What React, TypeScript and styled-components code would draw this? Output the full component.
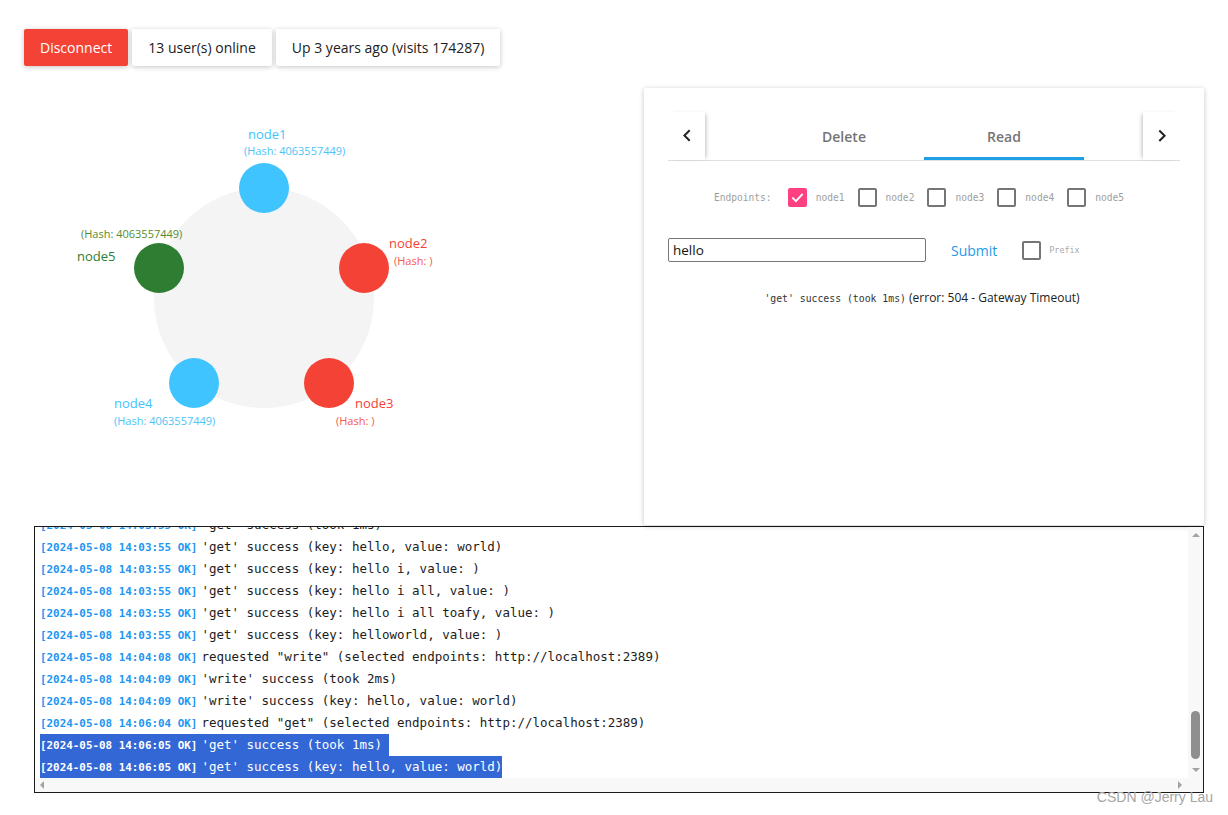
import React from "react";
import styled, { createGlobalStyle } from "styled-components";

const GlobalStyle = createGlobalStyle`
  html, body {
    margin: 0;
    padding: 0;
    background: #ffffff;
  }
  body {
    font-family: "Open Sans", "Noto Sans", sans-serif;
    color: #212121;
  }
  * {
    box-sizing: border-box;
  }
`;

const Page = styled.div`
  position: relative;
  width: 1228px;
  height: 815px;
  padding: 29px 24px 0 24px;
  overflow: hidden;
`;

const Toolbar = styled.div`
  display: flex;
  gap: 4px;
`;

const ToolButton = styled.button<{ $primary?: boolean }>`
  height: 37px;
  padding: 0 16px;
  border: none;
  border-radius: 2px;
  font-family: "Open Sans", sans-serif;
  font-size: 14px;
  background: ${(p) => (p.$primary ? "#f44336" : "#ffffff")};
  color: ${(p) => (p.$primary ? "#ffffff" : "#212121")};
  box-shadow: 0 1px 6px rgba(0, 0, 0, 0.12), 0 1px 4px rgba(0, 0, 0, 0.12);
  cursor: pointer;
`;

const MainRow = styled.div`
  display: flex;
  margin-top: 22px;
`;

const DiagramPane = styled.div`
  flex: 1;
  height: 437px;
`;

const Card = styled.div`
  width: 560px;
  height: 437px;
  background: #fff;
  border-radius: 2px;
  box-shadow: 0 1px 6px rgba(0, 0, 0, 0.12), 0 1px 4px rgba(0, 0, 0, 0.12);
  padding: 24px;
`;

const TabBar = styled.div`
  display: flex;
  height: 49px;
  border-bottom: 1px solid #e0e0e0;
`;

const ScrollButton = styled.div<{ $side: "left" | "right" }>`
  width: 37px;
  display: flex;
  align-items: center;
  justify-content: center;
  background: #fff;
  box-shadow: ${(p) =>
    p.$side === "left"
      ? "3px 0 4px -2px rgba(0, 0, 0, 0.25)"
      : "-3px 0 4px -2px rgba(0, 0, 0, 0.25)"};
`;

const TabScroller = styled.div`
  flex: 1;
  display: flex;
  justify-content: center;
`;

const Tab = styled.div<{ $active?: boolean }>`
  width: 160px;
  display: flex;
  align-items: center;
  justify-content: center;
  padding-top: 3px;
  font-size: 14px;
  font-weight: 600;
  color: #757575;
  border-bottom: 3px solid ${(p) => (p.$active ? "#1e9fe6" : "transparent")};
`;

const EndpointRow = styled.div`
  display: flex;
  align-items: center;
  justify-content: center;
  height: 20px;
  margin-top: 26px;
  padding-right: 10px;
`;

const MonoLabel = styled.span<{ $size: number; $color?: string }>`
  font-family: "DejaVu Sans Mono", monospace;
  font-size: ${(p) => p.$size}px;
  color: ${(p) => p.$color || "#9e9e9e"};
`;

const EndpointTitle = styled(MonoLabel)`
  margin-right: 16px;
`;

const Option = styled.label`
  display: flex;
  align-items: center;
  gap: 9px;
  margin-right: 13px;

  &:last-child {
    margin-right: 0;
  }
`;

const Box = styled.span<{ $checked?: boolean }>`
  width: 19px;
  height: 19px;
  border-radius: 2px;
  border: 2px solid ${(p) => (p.$checked ? "#ff4081" : "#757575")};
  background: ${(p) => (p.$checked ? "#ff4081" : "transparent")};
  display: flex;
  align-items: center;
  justify-content: center;
`;

const InputRow = styled.div`
  display: flex;
  align-items: center;
  margin-top: 31px;
`;

const KeyInput = styled.input`
  width: 258px;
  height: 24px;
  border: 1px solid #767676;
  border-radius: 2px;
  padding: 0 4px;
  font-family: "Open Sans", sans-serif;
  font-size: 13.5px;
  color: #111;
  outline: none;
`;

const SubmitButton = styled.button`
  margin-left: 25px;
  padding: 0;
  border: none;
  background: none;
  font-family: "Open Sans", sans-serif;
  font-size: 14px;
  color: #1e9be9;
  cursor: pointer;
`;

const PrefixOption = styled(Option)`
  margin-left: 25px;
  gap: 8px;
`;

const Result = styled.div`
  margin-top: 28px;
  padding-right: 4px;
  text-align: center;
  line-height: 16px;
  font-size: 12px;
  color: #222;
`;

const LogBox = styled.div`
  display: grid;
  grid-template-columns: 1fr 15px;
  grid-template-rows: 1fr 14px;
  width: 1170px;
  height: 267px;
  margin: 1px 0 0 10px;
  border: 1px solid #1a1a1a;
  background: #fff;
`;

const LogContent = styled.div`
  display: flex;
  flex-direction: column;
  justify-content: flex-end;
  overflow: hidden;
  padding-left: 5px;
`;

const LogLine = styled.div`
  height: 22px;
  flex-shrink: 0;
  white-space: pre;
  font-family: "DejaVu Sans Mono", monospace;
  font-size: 12.5px;
  line-height: 22px;
  color: #1c1c1c;
`;

const Sel = styled.span<{ $selected?: boolean; $trail?: boolean }>`
  display: inline-block;
  height: 22px;
  background: ${(p) => (p.$selected ? "#3367d6" : "transparent")};
  color: ${(p) => (p.$selected ? "#ffffff" : "inherit")};
  padding-right: ${(p) => (p.$trail ? "7px" : "0")};
`;

const Stamp = styled.span<{ $selected?: boolean }>`
  font-size: 10.9px;
  font-weight: bold;
  color: ${(p) => (p.$selected ? "#ffffff" : "#2196f3")};
  padding-right: 4px;
`;

const VScroll = styled.div`
  display: flex;
  flex-direction: column;
  background: #f8f8f8;
`;

const ArrowCell = styled.div`
  height: 16px;
  display: flex;
  align-items: center;
  justify-content: center;
`;

const Track = styled.div`
  flex: 1;
  display: flex;
  flex-direction: column;
  justify-content: flex-end;
  align-items: center;
  padding-bottom: 3px;
`;

const Thumb = styled.div`
  width: 9px;
  height: 48px;
  border-radius: 5px;
  background: #8f8f8f;
`;

const HScroll = styled.div`
  display: flex;
  align-items: center;
  justify-content: space-between;
  background: #f8f8f8;
  padding: 0 6px 0 5px;
`;

const Corner = styled.div`
  background: #f8f8f8;
`;

const Triangle = styled.span<{ $dir: "up" | "down" | "left" | "right" }>`
  width: 0;
  height: 0;
  border-style: solid;
  border-color: transparent;
  ${(p) =>
    p.$dir === "up"
      ? "border-width: 0 4px 4px 4px; border-bottom-color: #a3a3a3;"
      : p.$dir === "down"
      ? "border-width: 4px 4px 0 4px; border-top-color: #a3a3a3;"
      : p.$dir === "left"
      ? "border-width: 4px 4px 4px 0; border-right-color: #a3a3a3;"
      : "border-width: 4px 0 4px 4px; border-left-color: #a3a3a3;"}
`;

const Watermark = styled.div`
  position: absolute;
  right: 15px;
  top: 790px;
  font-family: "Liberation Sans", Arial, sans-serif;
  font-size: 14px;
  line-height: 15px;
  color: #a6a6a6;
`;

type NodeInfo = {
  name: string;
  cx: number;
  cy: number;
  color: string;
  hashColor: string;
  label: [number, number];
  hashPos: [number, number];
  hash: string;
};

const nodes: NodeInfo[] = [
  { name: "node1", cx: 264, cy: 188, color: "#40c4ff", hashColor: "#4fc3f7", label: [248, 139], hashPos: [244, 155], hash: "(Hash: 4063557449)" },
  { name: "node2", cx: 364, cy: 268, color: "#f44336", hashColor: "#f55a4e", label: [389, 248], hashPos: [394, 265], hash: "(Hash: )" },
  { name: "node3", cx: 329, cy: 383, color: "#f44336", hashColor: "#f55a4e", label: [355, 408], hashPos: [336, 425], hash: "(Hash: )" },
  { name: "node4", cx: 194, cy: 383, color: "#40c4ff", hashColor: "#4fc3f7", label: [114, 408], hashPos: [114, 425], hash: "(Hash: 4063557449)" },
  { name: "node5", cx: 159, cy: 268, color: "#2e7d32", hashColor: "#558b2f", label: [77, 261], hashPos: [81, 238], hash: "(Hash: 4063557449)" },
];

const logs: { stamp: string; msg: string; selected?: boolean }[] = [
  { stamp: "[2024-05-08 14:03:55 OK]", msg: "'get' success (took 1ms)" },
  { stamp: "[2024-05-08 14:03:55 OK]", msg: "'get' success (key: hello, value: world)" },
  { stamp: "[2024-05-08 14:03:55 OK]", msg: "'get' success (key: hello i, value: )" },
  { stamp: "[2024-05-08 14:03:55 OK]", msg: "'get' success (key: hello i all, value: )" },
  { stamp: "[2024-05-08 14:03:55 OK]", msg: "'get' success (key: hello i all toafy, value: )" },
  { stamp: "[2024-05-08 14:03:55 OK]", msg: "'get' success (key: helloworld, value: )" },
  { stamp: "[2024-05-08 14:04:08 OK]", msg: "requested \"write\" (selected endpoints: http://localhost:2389)" },
  { stamp: "[2024-05-08 14:04:09 OK]", msg: "'write' success (took 2ms)" },
  { stamp: "[2024-05-08 14:04:09 OK]", msg: "'write' success (key: hello, value: world)" },
  { stamp: "[2024-05-08 14:06:04 OK]", msg: "requested \"get\" (selected endpoints: http://localhost:2389)" },
  { stamp: "[2024-05-08 14:06:05 OK]", msg: "'get' success (took 1ms)", selected: true },
  { stamp: "[2024-05-08 14:06:05 OK]", msg: "'get' success (key: hello, value: world)", selected: true },
];

const ChevronLeft = () => (
  <svg width="24" height="24" viewBox="0 0 24 24">
    <path d="M15.41 16.09l-4.58-4.59 4.58-4.59L14 5.5l-6 6 6 6z" fill="#222" />
  </svg>
);

const ChevronRight = () => (
  <svg width="24" height="24" viewBox="0 0 24 24">
    <path d="M8.59 16.34l4.58-4.59-4.58-4.59L10 5.75l6 6-6 6z" fill="#222" />
  </svg>
);

const Check = () => (
  <svg width="15" height="15" viewBox="0 0 16 16">
    <polyline points="2.5,8.2 6.3,12 13.5,4.2" fill="none" stroke="#fff" strokeWidth="2" />
  </svg>
);

const Ring = () => (
  <svg width="620" height="437" viewBox="24 88 620 437">
    <circle cx="264" cy="298" r="110" fill="#f4f4f4" />
    {nodes.map((n) => (
      <g key={n.name} fontFamily="'Open Sans', sans-serif">
        <circle cx={n.cx} cy={n.cy} r="25" fill={n.color} />
        <text x={n.label[0]} y={n.label[1]} fontSize="13" fill={n.color}>
          {n.name}
        </text>
        <text x={n.hashPos[0]} y={n.hashPos[1]} fontSize="11" fill={n.hashColor}>
          {n.hash}
        </text>
      </g>
    ))}
  </svg>
);

const endpoints = ["node1", "node2", "node3", "node4", "node5"];

export default function App() {
  return (
    <Page>
      <GlobalStyle />
      <Toolbar>
        <ToolButton $primary>Disconnect</ToolButton>
        <ToolButton>13 user(s) online</ToolButton>
        <ToolButton>Up 3 years ago (visits 174287)</ToolButton>
      </Toolbar>

      <MainRow>
        <DiagramPane>
          <Ring />
        </DiagramPane>

        <Card>
          <TabBar>
            <ScrollButton $side="left">
              <ChevronLeft />
            </ScrollButton>
            <TabScroller>
              <Tab>Delete</Tab>
              <Tab $active>Read</Tab>
            </TabScroller>
            <ScrollButton $side="right">
              <ChevronRight />
            </ScrollButton>
          </TabBar>

          <EndpointRow>
            <EndpointTitle $size={9.6}>Endpoints:</EndpointTitle>
            {endpoints.map((name, i) => (
              <Option key={name}>
                <Box $checked={i === 0}>{i === 0 && <Check />}</Box>
                <MonoLabel $size={9.6}>{name}</MonoLabel>
              </Option>
            ))}
          </EndpointRow>

          <InputRow>
            <KeyInput defaultValue="hello" />
            <SubmitButton>Submit</SubmitButton>
            <PrefixOption>
              <Box />
              <MonoLabel $size={8.4} $color="#aaaaaa">Prefix</MonoLabel>
            </PrefixOption>
          </InputRow>

          <Result>
            <MonoLabel $size={9.8} $color="#333">'get' success (took 1ms)</MonoLabel> (error: 504 - Gateway Timeout)
          </Result>
        </Card>
      </MainRow>

      <LogBox>
        <LogContent>
          {logs.map((l, i) => (
            <LogLine key={i}>
              <Sel $selected={l.selected} $trail={l.selected && i < logs.length - 1}>
                <Stamp $selected={l.selected}>{l.stamp}</Stamp>
                {l.msg}
              </Sel>
            </LogLine>
          ))}
        </LogContent>
        <VScroll>
          <ArrowCell>
            <Triangle $dir="up" />
          </ArrowCell>
          <Track>
            <Thumb />
          </Track>
          <ArrowCell>
            <Triangle $dir="down" />
          </ArrowCell>
        </VScroll>
        <HScroll>
          <Triangle $dir="left" />
          <Triangle $dir="right" />
        </HScroll>
        <Corner />
      </LogBox>

      <Watermark>CSDN @Jerry Lau</Watermark>
    </Page>
  );
}
